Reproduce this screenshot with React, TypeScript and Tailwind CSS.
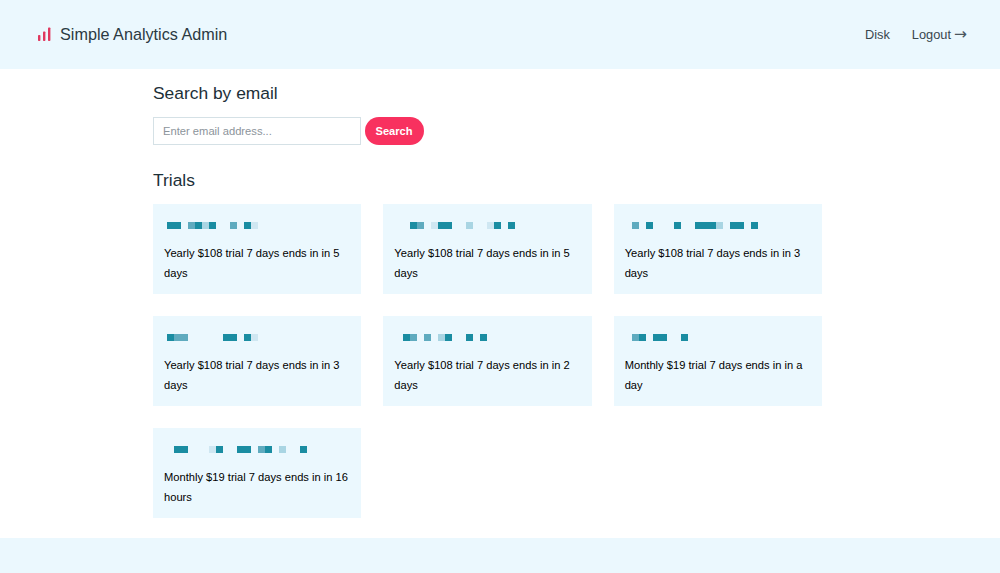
const trials = [
  { cells: 'dd.mdld..m.df', offset: 'ml-[14px]', text: 'Yearly $108 trial 7 days ends in in 5 days' },
  { cells: '..dm.fdd..l..fd.d', offset: 'ml-[13px]', text: 'Yearly $108 trial 7 days ends in in 5 days' },
  { cells: 'm.d...d..dddl.dd.d', offset: 'ml-[18px]', text: 'Yearly $108 trial 7 days ends in in 3 days' },
  { cells: 'dmm.....dd.df', offset: 'ml-[14px]', text: 'Yearly $108 trial 7 days ends in in 3 days' },
  { cells: 'dm.m.ld..d.d', offset: 'ml-[20px]', text: 'Yearly $108 trial 7 days ends in in 2 days' },
  { cells: 'md.dd..d', offset: 'ml-[18px]', text: 'Monthly $19 trial 7 days ends in in a day' },
  { cells: 'dd...fd..dd.md.l..d', offset: 'ml-[21px]', text: 'Monthly $19 trial 7 days ends in in 16 hours' },
];

const cellColors: Record<string, string> = {
  d: 'bg-[#1a8da2]',
  m: 'bg-[#5fabbf]',
  l: 'bg-[#a9d5e3]',
  f: 'bg-[#cfe7f2]',
  '.': 'bg-transparent',
};

function BlurredEmail({ cells, offset }: { cells: string; offset: string }) {
  return (
    <div className={`flex h-[7px] ${offset}`}>
      {cells.split('').map((c, i) => (
        <span key={i} className={`h-[7px] w-[7px] ${cellColors[c]}`} />
      ))}
    </div>
  );
}

function Logo() {
  return (
    <svg width="14" height="15" viewBox="0 0 14 15" className="text-[#e0395f]">
      <rect x="1" y="8" width="2.4" height="6" rx="0.8" fill="currentColor" />
      <rect x="6" y="4.5" width="2.4" height="9.5" rx="0.8" fill="currentColor" />
      <rect x="11" y="0.5" width="2.4" height="13.5" rx="0.8" fill="currentColor" />
    </svg>
  );
}

export default function App() {
  return (
    <div className="flex min-h-[573px] flex-col bg-white font-['Liberation_Sans',Arial,sans-serif]">
      <header className="flex h-[69px] items-center bg-[#ebf8fe] pl-[37px] pr-[33px]">
        <Logo />
        <span className="ml-[9px] text-[16.2px] text-[#2b3a42]">Simple Analytics Admin</span>
        <nav className="ml-auto flex items-center gap-[22px] text-[12.8px] text-[#39474e]">
          <a href="#">Disk</a>
          <a href="#" className="flex items-center gap-[3px]">
            Logout <span className="font-['DejaVu_Sans',sans-serif] text-[15.5px] leading-none text-[#4a575e]">→</span>
          </a>
        </nav>
      </header>

      <main className="ml-[153px] w-[669px] flex-1 pb-5 pt-[13px]">
        <h2 className="text-[17.4px] leading-[22px] text-[#1d3038]">Search by email</h2>
        <form className="mt-[13px] flex items-center gap-[3.5px]">
          <input
            placeholder="Enter email address..."
            className="h-[28px] w-[208px] border border-[#d5e1e6] bg-white px-[9px] text-[11.2px] placeholder:text-[#8c949b] outline-none"
          />
          <button type="button" className="h-[28px] w-[59px] rounded-full bg-[#f8315f] text-[11.1px] font-bold text-white">
            Search
          </button>
        </form>

        <h2 className="mt-[24px] text-[17.4px] leading-[22px] text-[#1d3038]">Trials</h2>

        <div className="mt-[13px] grid grid-cols-3 gap-x-[22px] gap-y-[22px]">
          {trials.map((trial, i) => (
            <div key={i} className="h-[90px] bg-[#ebf8fe] pt-[18px]">
              <BlurredEmail cells={trial.cells} offset={trial.offset} />
              <p className="mt-[14px] px-[11px] text-[11.15px] leading-[20px] text-black">{trial.text}</p>
            </div>
          ))}
        </div>
      </main>

      <footer className="h-[35px] bg-[#ebf8fe]" />
    </div>
  );
}
